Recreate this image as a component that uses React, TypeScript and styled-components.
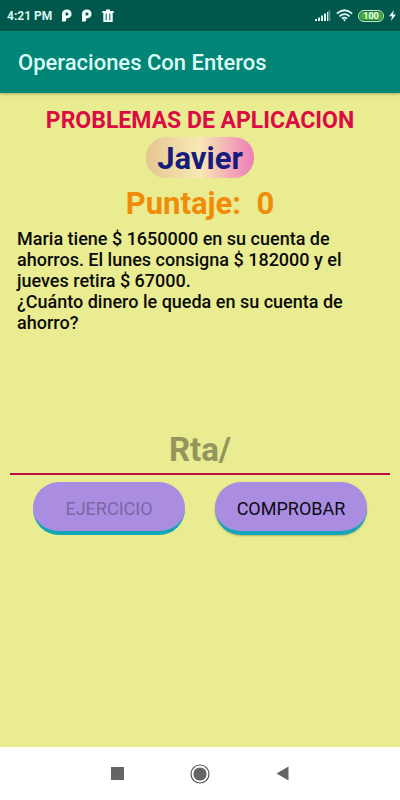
import React, { useState } from "react";
import styled, { createGlobalStyle } from "styled-components";

const GlobalStyle = createGlobalStyle`
  *, *::before, *::after { box-sizing: border-box; }
  body { margin: 0; font-family: Roboto, "Liberation Sans", sans-serif; }
`;

const Screen = styled.div`
  min-height: 100vh;
  display: flex;
  flex-direction: column;
  background: #e9ec90;
`;

const StatusBar = styled.div`
  height: 31px;
  padding: 0 4px 0 7px;
  display: flex;
  align-items: center;
  justify-content: space-between;
  background: #00574b;
  color: #d9f5ee;
`;

const StatusGroup = styled.div<{ $gap: number }>`
  display: flex;
  align-items: center;
  gap: ${(p) => p.$gap}px;
`;

const Clock = styled.span`
  font-size: 12px;
  line-height: 16px;
  font-weight: 700;
`;

const AppBar = styled.header`
  height: 62px;
  padding: 2px 18px 0;
  display: flex;
  align-items: center;
  background: #008577;
  box-shadow: 0 1px 3px rgba(60, 80, 20, 0.4);
`;

const AppTitle = styled.h1`
  margin: 0;
  font-size: 22px;
  line-height: 28px;
  font-weight: 500;
  color: #dcfbf5;
`;

const Content = styled.main`
  flex: 1;
  padding: 14px 10px 0;
  display: flex;
  flex-direction: column;
`;

const Heading = styled.h2`
  margin: 0;
  text-align: center;
  font-size: 23px;
  line-height: 28px;
  font-weight: 700;
  color: #dc0b45;
`;

const PlayerName = styled.div`
  align-self: center;
  margin-top: 2px;
  padding: 2px 11px 0;
  height: 41px;
  border-radius: 20px;
  font-size: 31px;
  line-height: 40px;
  font-weight: 700;
  color: #161b7c;
  background: linear-gradient(to right, #e5c692, #f8e9b4 50%, #ee7db8);
`;

const Score = styled.p`
  margin: 8px 0 0;
  text-align: center;
  white-space: pre;
  font-size: 31px;
  line-height: 36px;
  font-weight: 700;
  color: #f18c0a;
`;

const Problem = styled.p`
  margin: 6px 0 0;
  padding: 0 40px 0 7px;
  min-height: 190px;
  white-space: pre-line;
  font-size: 18px;
  line-height: 21px;
  font-weight: 500;
  color: #0b0b0b;
`;

const Answer = styled.input`
  width: 100%;
  height: 56px;
  margin-top: 1px;
  padding: 6px 0 0;
  border: 0;
  border-bottom: 2px solid #b80f45;
  border-radius: 0;
  outline: 0;
  background: transparent;
  text-align: center;
  font-family: inherit;
  font-size: 33px;
  font-weight: 700;
  color: #0b0b0b;

  &::placeholder {
    color: #93955c;
    opacity: 1;
  }
`;

const Actions = styled.div`
  display: grid;
  grid-template-columns: 1fr 1fr;
  gap: 30px;
  padding: 7px 23px 0;
`;

const ActionButton = styled.button`
  height: 53px;
  padding: 4px 0 0;
  border: 0;
  border-bottom: 4px solid #12a6b8;
  border-radius: 26px;
  background: #aa8de1;
  font-family: inherit;
  font-size: 18px;
  line-height: 24px;
  font-weight: 400;
  color: #0d0a12;
  box-shadow: 0 1px 2px rgba(60, 80, 40, 0.35);

  &:disabled {
    color: #7c66a8;
    box-shadow: none;
  }
`;

const NavBar = styled.nav`
  height: 53px;
  padding: 0 77px 0 76px;
  display: flex;
  align-items: center;
  justify-content: space-between;
  background: #fff;
`;

const NavButton = styled.button`
  padding: 0;
  border: 0;
  width: 82px;
  height: 24px;
  display: flex;
  align-items: center;
  justify-content: center;
  background: none;
`;

const ParkingIcon = () => (
  <svg width="10" height="13" viewBox="0 0 10 13" aria-hidden="true">
    <path
      fillRule="evenodd"
      d="M0 5C0 2 2 0.5 5 0.5S9.6 2.3 9.6 5 7.8 9.2 5 9.2L4.2 9.2V11Q4.2 12.5 2.5 12.5H0ZM3.6 3.5V6.5H5A1.5 1.5 0 0 0 5 3.5Z"
      fill="#f4fffc"
    />
  </svg>
);

const TrashIcon = () => (
  <svg width="12" height="14" viewBox="0 0 12 14" aria-hidden="true">
    <path
      fillRule="evenodd"
      d="M4 0.5H8V2H11.7V4H10.7V13H1.3V4H0.3V2H4ZM3.7 4.5V11.3H4.7V4.5ZM7.3 4.5V11.3H8.3V4.5Z"
      fill="#f4fffc"
    />
  </svg>
);

const SignalIcon = () => (
  <svg width="16" height="11" viewBox="0 0 16 11" aria-hidden="true">
    <path d="M0 9h2v2H0zM3 7.5h2V11H3zM6 5.5h2V11H6zM9 3.5h2V11H9z" fill="#d9f5ee" />
    <path d="M12 2h1.4v9H12z" fill="#d9f5ee" />
    <path d="M13.4 0.5h2V11h-2z" fill="#4f8f85" />
  </svg>
);

const WifiIcon = () => (
  <svg width="17" height="13" viewBox="0 0 17 13" aria-hidden="true">
    <g fill="none" stroke="#e4faf5" strokeWidth="1.7">
      <path d="M0.8 4.7Q8.5 -2.2 16.2 4.7" />
      <path d="M3.4 7.3Q8.5 2.8 13.6 7.3" />
      <path d="M5.9 9.7Q8.5 7.5 11.1 9.7" />
    </g>
    <path d="M6.9 10.8Q8.5 9.6 10.1 10.8L8.5 12.6Z" fill="#e4faf5" />
  </svg>
);

const Battery = styled.span`
  width: 26px;
  height: 12px;
  display: flex;
  align-items: center;
  justify-content: center;
  border: 1px solid #c4ecc5;
  border-radius: 6px;
  background: #45ae38;
  box-shadow: inset 0 0 0 1px #17694b;
  color: #effff0;
  font-size: 9px;
  line-height: 10px;
  font-weight: 700;
`;

const BoltIcon = () => (
  <svg width="7" height="11" viewBox="0 0 7 11" aria-hidden="true">
    <path d="M5 0L0 6.2H3L2 11L7 4.5H4Z" fill="#e4faf5" />
  </svg>
);

const problemText =
  "Maria tiene $ 1650000 en su cuenta de ahorros. El lunes consigna $ 182000 y el jueves retira $ 67000.\n¿Cuánto dinero le queda en su cuenta de ahorro?";

export default function App() {
  const [answer, setAnswer] = useState("");

  return (
    <Screen>
      <GlobalStyle />
      <StatusBar>
        <StatusGroup $gap={10}>
          <Clock>4:21 PM</Clock>
          <ParkingIcon />
          <ParkingIcon />
          <TrashIcon />
        </StatusGroup>
        <StatusGroup $gap={5}>
          <SignalIcon />
          <WifiIcon />
          <Battery>100</Battery>
          <BoltIcon />
        </StatusGroup>
      </StatusBar>
      <AppBar>
        <AppTitle>Operaciones Con Enteros</AppTitle>
      </AppBar>
      <Content>
        <Heading>PROBLEMAS DE APLICACION</Heading>
        <PlayerName>Javier</PlayerName>
        <Score>{"Puntaje:  0"}</Score>
        <Problem>{problemText}</Problem>
        <Answer
          aria-label="Respuesta"
          placeholder="Rta/"
          inputMode="numeric"
          value={answer}
          onChange={(e) => setAnswer(e.target.value)}
        />
        <Actions>
          <ActionButton type="button" disabled>
            EJERCICIO
          </ActionButton>
          <ActionButton type="button">COMPROBAR</ActionButton>
        </Actions>
      </Content>
      <NavBar aria-label="Sistema">
        <NavButton type="button" aria-label="Recientes">
          <svg width="13" height="13" viewBox="0 0 13 13" aria-hidden="true">
            <path d="M0 0h13v13H0z" fill="#656565" />
          </svg>
        </NavButton>
        <NavButton type="button" aria-label="Inicio">
          <svg width="20" height="20" viewBox="0 0 20 20" aria-hidden="true">
            <circle cx="10" cy="10" r="9" fill="none" stroke="#555" strokeWidth="1.2" />
            <circle cx="10" cy="10" r="6.6" fill="#656565" />
          </svg>
        </NavButton>
        <NavButton type="button" aria-label="Atrás">
          <svg width="13" height="15" viewBox="0 0 13 15" aria-hidden="true">
            <path d="M12.5 0.5V14.5L0.5 7.5Z" fill="#656565" />
          </svg>
        </NavButton>
      </NavBar>
    </Screen>
  );
}
